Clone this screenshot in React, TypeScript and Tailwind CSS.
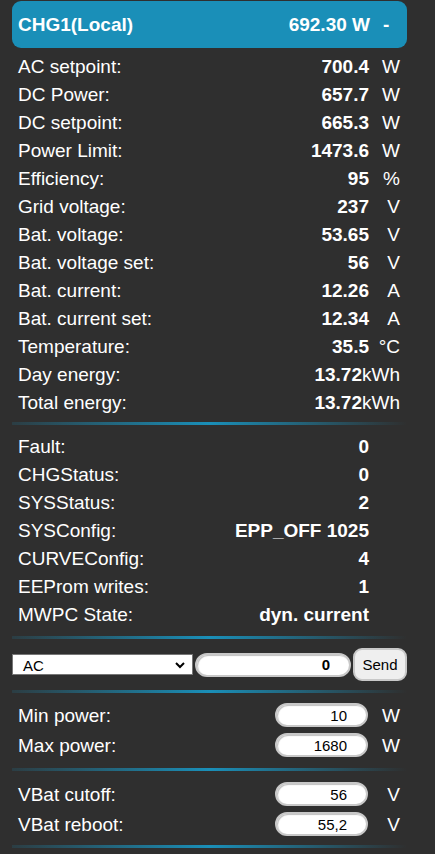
const FONT = { fontFamily: '"Liberation Sans", Arial, sans-serif' };

const liveRows: [string, string, string][] = [
  ["AC setpoint:", "700.4", "W"],
  ["DC Power:", "657.7", "W"],
  ["DC setpoint:", "665.3", "W"],
  ["Power Limit:", "1473.6", "W"],
  ["Efficiency:", "95", "%"],
  ["Grid voltage:", "237", "V"],
  ["Bat. voltage:", "53.65", "V"],
  ["Bat. voltage set:", "56", "V"],
  ["Bat. current:", "12.26", "A"],
  ["Bat. current set:", "12.34", "A"],
  ["Temperature:", "35.5", "°C"],
  ["Day energy:", "13.72", "kWh"],
  ["Total energy:", "13.72", "kWh"],
];

const statusRows: [string, string][] = [
  ["Fault:", "0"],
  ["CHGStatus:", "0"],
  ["SYSStatus:", "2"],
  ["SYSConfig:", "EPP_OFF 1025"],
  ["CURVEConfig:", "4"],
  ["EEProm writes:", "1"],
  ["MWPC State:", "dyn. current"],
];

function Sep({ className = "" }: { className?: string }) {
  return (
    <div
      className={`h-[3px] w-full bg-gradient-to-r from-[#1a8fb8]/15 via-[#1a8fb8] to-[#1a8fb8]/0 ${className}`}
    />
  );
}

function SettingRow({ label, value, unit }: { label: string; value: string; unit: string }) {
  return (
    <div className="flex h-[30px] items-center pl-[6px] pr-[7px]">
      <span className="flex-1">{label}</span>
      <input
        readOnly
        value={value}
        className="h-[24px] w-[93px] rounded-full border-2 border-[#c8c8c8] bg-white pr-[19px] text-right text-[15px] text-black shadow-[inset_1px_1px_1px_rgba(0,0,0,0.25)] outline-none"
        style={FONT}
      />
      <span className="w-[32px] text-right">{unit}</span>
    </div>
  );
}

export default function App() {
  return (
    <div className="min-h-[854px] w-[435px] bg-[#2f2f2f] text-[19px] leading-none text-white" style={FONT}>
      <div className="ml-[12px] w-[395px] pt-[1px]">
        {/* charger header */}
        <div className="flex h-[47px] items-center rounded-[9px] bg-[#1a8fb8] pl-[6px] font-bold">
          <span className="flex-1">CHG1(Local)</span>
          <span>692.30 W</span>
          <span className="w-[37px] pl-[13px]">-</span>
        </div>

        <div className="mt-[4px]">
          {liveRows.map(([label, value, unit]) => (
            <div key={label} className="flex h-[28px] items-center pl-[6px] pr-[7px]">
              <span className="flex-1">{label}</span>
              <span className="font-bold">{value}</span>
              <span className="min-w-[31px] whitespace-nowrap text-right">{unit}</span>
            </div>
          ))}
        </div>

        <Sep className="mt-[6px]" />

        <div className="mt-[7px]">
          {statusRows.map(([label, value]) => (
            <div key={label} className="flex h-[28px] items-center pl-[6px] pr-[38px]">
              <span className="flex-1">{label}</span>
              <span className="font-bold">{value}</span>
            </div>
          ))}
        </div>

        <Sep className="mt-[8px]" />

        {/* manual setpoint */}
        <div className="mt-[9px] flex h-[33px] items-center gap-[2px]">
          <div className="relative h-[21px] w-[181px] border border-[#767676] bg-white">
            <span className="absolute left-[10px] top-[3px] text-[15px] text-black">AC</span>
            <svg className="absolute right-[7px] top-[7px]" width="10" height="7" viewBox="0 0 10 7">
              <path d="M1 1l4 4 4-4" fill="none" stroke="#000" strokeWidth="2" />
            </svg>
          </div>
          <input
            readOnly
            value="0"
            className="h-[24px] w-[156px] rounded-full border-2 border-[#c8c8c8] bg-white pr-[19px] text-right text-[15px] font-bold text-black shadow-[inset_1px_1px_1px_rgba(0,0,0,0.25)] outline-none"
            style={FONT}
          />
          <button
            className="h-[33px] w-[54px] rounded-[9px] border-2 border-[#c8c8c8] bg-[#efefef] text-[15px] text-black"
            style={FONT}
          >
            Send
          </button>
        </div>

        <Sep className="mt-[9px]" />

        <div className="mt-[7px]">
          <SettingRow label="Min power:" value="10" unit="W" />
          <SettingRow label="Max power:" value="1680" unit="W" />
        </div>

        <Sep className="mt-[8px]" />

        <div className="mt-[8px]">
          <SettingRow label="VBat cutoff:" value="56" unit="V" />
          <SettingRow label="VBat reboot:" value="55,2" unit="V" />
        </div>

        <Sep className="mt-[6px]" />
      </div>
    </div>
  );
}
